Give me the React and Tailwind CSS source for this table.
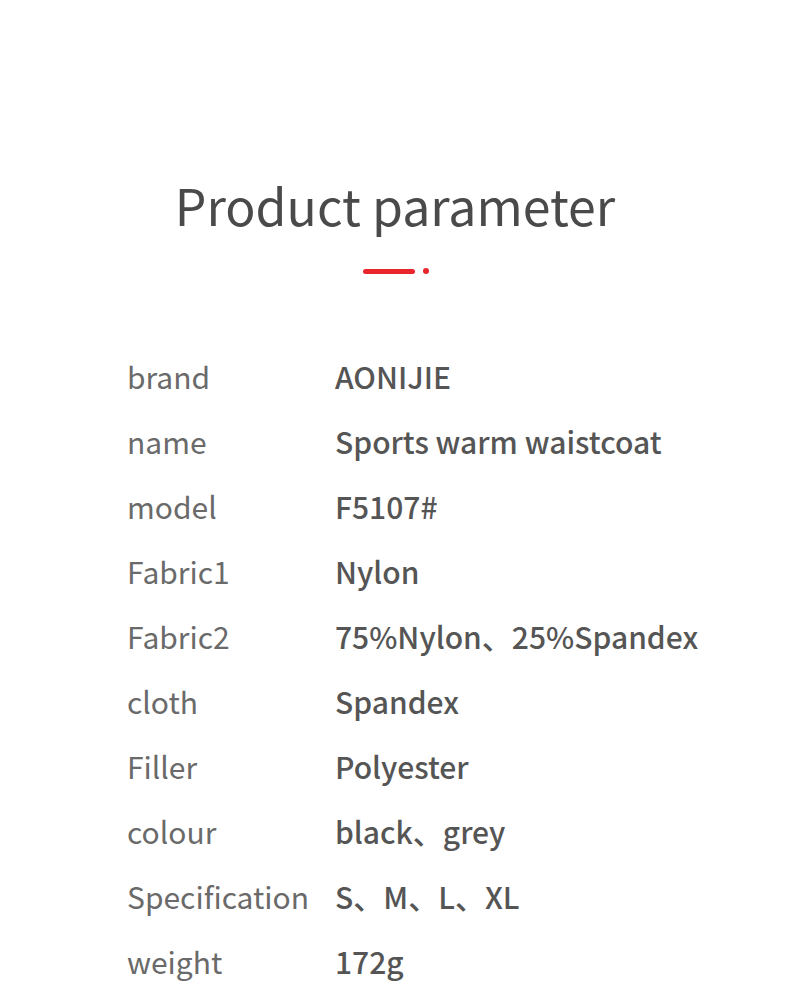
export default function App() {
  const rows = [
    ["brand", "AONIJIE"],
    ["name", "Sports warm waistcoat"],
    ["model", "F5107#"],
    ["Fabric1", "Nylon"],
    ["Fabric2", "75%Nylon、25%Spandex"],
    ["cloth", "Spandex"],
    ["Filler", "Polyester"],
    ["colour", "black、grey"],
    ["Specification", "S、M、L、XL"],
    ["weight", "172g"],
  ];
  return (
    <div
      className="w-[790px] h-[1001px] bg-white overflow-hidden"
      style={{ fontFamily: '"Noto Sans CJK SC", "Noto Sans", sans-serif' }}
    >
      <div className="pt-[172px] flex flex-col items-center">
        <h1 className="text-[50px] leading-[64px] text-[#4a4a4a] font-normal">Product parameter</h1>
        <div className="mt-[32px] flex items-center gap-[8px] ml-[2px]">
          <div className="w-[52px] h-[5px] rounded-full bg-[#e8262c]" />
          <div className="w-[6px] h-[6px] rounded-full bg-[#e8262c]" />
        </div>
      </div>
      <div className="mt-[70px] pl-[127px] flex flex-col">
        {rows.map(([k, v]) => (
          <div key={k} className="flex h-[65px] items-center text-[30px]">
            <div className="w-[208px] text-[#6a6a6a]">{k}</div>
            <div className="text-[#555555] font-medium">{v}</div>
          </div>
        ))}
      </div>
    </div>
  );
}
